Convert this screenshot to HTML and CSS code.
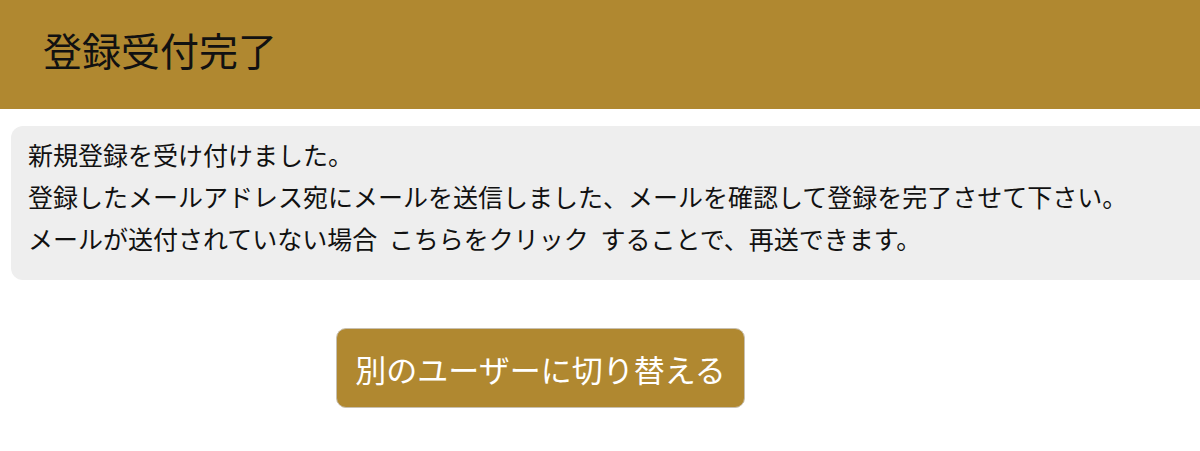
FILE: index.html
```html
<!DOCTYPE html>
<html lang="ja">
<head>
<meta charset="utf-8">
<title>登録受付完了</title>
<link rel="stylesheet" href="styles.css">
</head>
<body>
<header class="page-header">
  <h1 class="page-title">登録受付完了</h1>
</header>
<main class="content">
  <section class="notice">
    <p class="notice-line">新規登録を受け付けました。</p>
    <p class="notice-line">登録したメールアドレス宛にメールを送信しました、メールを確認して登録を完了させて下さい。</p>
    <p class="notice-line">メールが送付されていない場合 <a class="resend-link" href="#">こちらをクリック</a> することで、再送できます。</p>
  </section>
  <div class="actions">
    <button class="switch-btn" type="button">別のユーザーに切り替える</button>
  </div>
</main>
</body>
</html>
```

FILE: styles.css
```css
html, body {
  margin: 0;
  padding: 0;
  background: #ffffff;
  overflow: hidden;
}
body {
  font-family: "Noto Sans CJK JP", "Noto Sans", sans-serif;
  color: #111111;
}
.page-header {
  background: #b08830;
  height: 109px;
  box-sizing: border-box;
  display: flex;
  align-items: center;
  padding-left: 43px;
  padding-bottom: 10px;
}
.page-title {
  margin: 0;
  font-size: 39px;
  font-weight: 400;
  line-height: 1;
  color: #111111;
}
.content {
  padding-top: 17px;
}
.notice {
  margin-left: 11px;
  background: #eeeeee;
  border-radius: 12px 0 0 12px;
  padding: 7px 0 21px 17px;
}
.notice-line {
  margin: 0;
  font-size: 25px;
  line-height: 42px;
  color: #111111;
  white-space: nowrap;
}
.resend-link {
  color: inherit;
  text-decoration: none;
  margin: 0 6px;
}
.actions {
  padding-top: 48px;
  padding-left: 336px;
}
.switch-btn {
  width: 409px;
  height: 80px;
  background: #b08830;
  border: 1px solid #c8c0b0;
  border-radius: 10px;
  color: #ffffff;
  font-family: "Noto Sans CJK JP", "Noto Sans", sans-serif;
  font-size: 31px;
  padding: 0;
  cursor: pointer;
}
```
